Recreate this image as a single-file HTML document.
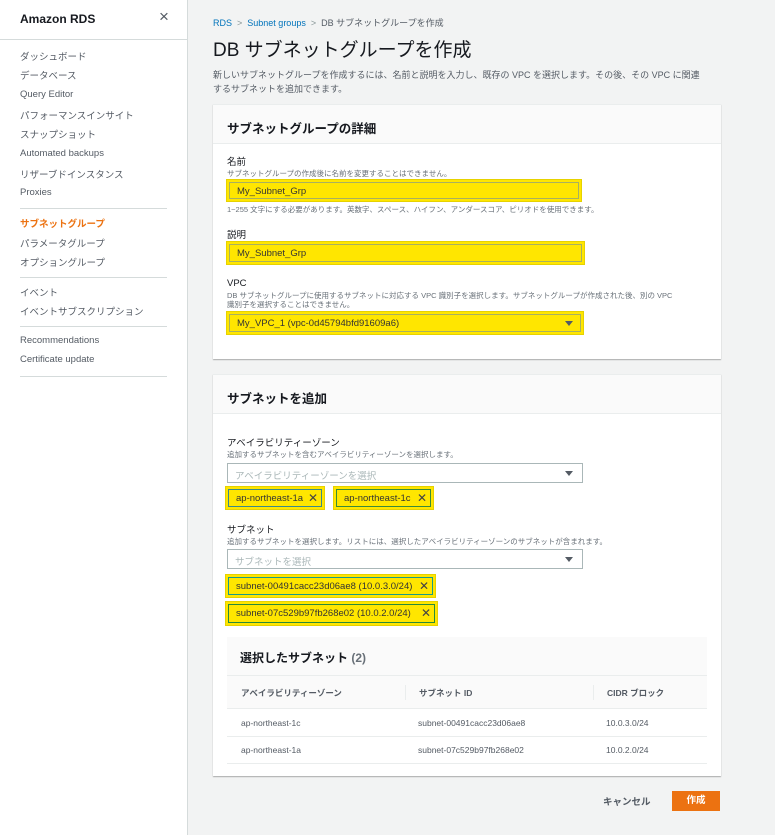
<!DOCTYPE html>
<html><head><meta charset="utf-8"><style>
*{box-sizing:border-box;margin:0;padding:0}
body{width:775px;height:835px;background:#f2f3f3;font-family:"Liberation Sans","Noto Sans CJK JP",sans-serif;position:relative;overflow:hidden;color:#16191f}
.a{position:absolute;white-space:nowrap}
.side{position:absolute;left:0;top:0;width:188px;height:835px;background:#fff;border-right:1px solid #d5dbdb}
.si{position:absolute;left:20px;font-size:9.5px;color:#545b64}
.hr{position:absolute;left:20px;width:147px;border-top:1px solid #d5dbdb}
.panel{position:absolute;left:213px;width:508px;background:#fff;box-shadow:0 1px 1px rgba(0,0,0,.3);border-top:1px solid #eaeded}
.ph{height:39px;background:#fafafa;border-bottom:1px solid #eaeded;font-weight:bold;font-size:12.5px;padding:13px 0 0 14px}
.lbl{font-size:9.5px;color:#16191f}
.desc{font-size:7.5px;color:#687078}
.yel{position:absolute;background:#ffe600;border:1px solid #e6d200}
.inp{position:absolute;border:1px solid #aab7b8;background:#fff;font-size:9.5px;padding:4px 7px;color:#16191f}
.yel .inner{position:absolute;left:2px;top:2px;right:2px;bottom:2px;border:1px solid #a8b060;font-size:9.5px;padding:3px 7px;color:#333}
.tri{position:absolute;right:9px;top:7px;width:0;height:0;border-left:4px solid transparent;border-right:4px solid transparent;border-top:5px solid #545b64}
.x{position:absolute;right:6px;top:1px;font-size:12px;color:#444;font-weight:300}
.th{font-size:8.5px;font-weight:bold;color:#545b64}
.td{font-size:8.5px;color:#545b64}
</style></head><body>
<div class="side">
<div class="a" style="left:20px;top:12px;font-size:12px;font-weight:bold;color:#16191f">Amazon RDS</div>
<div class="a" style="left:159px;top:7px;font-size:17px;color:#545b64">×</div>
<div style="position:absolute;left:0;top:39px;width:187px;border-top:1px solid #d5dbdb"></div>
<div class="si" style="top:49px">ダッシュボード</div>
<div class="si" style="top:68px">データベース</div>
<div class="si" style="top:89px">Query Editor</div>
<div class="si" style="top:108px">パフォーマンスインサイト</div>
<div class="si" style="top:127px">スナップショット</div>
<div class="si" style="top:148px">Automated backups</div>
<div class="si" style="top:167px">リザーブドインスタンス</div>
<div class="si" style="top:187px">Proxies</div>
<div class="hr" style="top:208px"></div>
<div class="si" style="top:216px;color:#ec7211;font-weight:bold">サブネットグループ</div>
<div class="si" style="top:236px">パラメータグループ</div>
<div class="si" style="top:255px">オプショングループ</div>
<div class="hr" style="top:277px"></div>
<div class="si" style="top:285px">イベント</div>
<div class="si" style="top:304px">イベントサブスクリプション</div>
<div class="hr" style="top:326px"></div>
<div class="si" style="top:335px">Recommendations</div>
<div class="si" style="top:354px">Certificate update</div>
<div class="hr" style="top:376px"></div>
</div>

<div class="a" style="left:213px;top:16px;font-size:9px;color:#0073bb">RDS <span style="color:#879596">&nbsp;&gt;&nbsp;</span> Subnet groups <span style="color:#879596">&nbsp;&gt;&nbsp;</span> <span style="color:#545b64">DB サブネットグループを作成</span></div>
<div class="a" style="left:213px;top:35px;font-size:19px;color:#16191f">DB サブネットグループを作成</div>
<div class="a" style="left:213px;top:68px;font-size:9px;color:#545b64;line-height:14px">新しいサブネットグループを作成するには、名前と説明を入力し、既存の VPC を選択します。その後、その VPC に関連<br>するサブネットを追加できます。</div>

<div class="panel" style="top:104px;height:255px">
<div class="ph">サブネットグループの詳細</div>
</div>
<div class="a lbl" style="left:227px;top:154px">名前</div>
<div class="a desc" style="left:227px;top:168px">サブネットグループの作成後に名前を変更することはできません。</div>
<div class="yel" style="left:226px;top:179px;width:356px;height:23px"><div class="inner">My_Subnet_Grp</div></div>
<div class="a desc" style="left:227px;top:204px">1~255 文字にする必要があります。英数字、スペース、ハイフン、アンダースコア、ピリオドを使用できます。</div>
<div class="a lbl" style="left:227px;top:227px">説明</div>
<div class="yel" style="left:226px;top:241px;width:359px;height:24px"><div class="inner">My_Subnet_Grp</div></div>
<div class="a lbl" style="left:227px;top:278px">VPC</div>
<div class="a desc" style="left:227px;top:291px;line-height:9px">DB サブネットグループに使用するサブネットに対応する VPC 識別子を選択します。サブネットグループが作成された後、別の VPC<br>識別子を選択することはできません。</div>
<div class="yel" style="left:226px;top:311px;width:358px;height:24px"><div class="inner">My_VPC_1 (vpc-0d45794bfd91609a6)</div><div class="tri" style="top:9px;right:10px"></div></div>

<div class="panel" style="top:374px;height:402px">
<div class="ph">サブネットを追加</div>
</div>
<div class="a lbl" style="left:227px;top:435px">アベイラビリティーゾーン</div>
<div class="a desc" style="left:227px;top:449px">追加するサブネットを含むアベイラビリティーゾーンを選択します。</div>
<div class="inp" style="left:227px;top:463px;width:356px;height:20px;color:#aab7b8">アベイラビリティーゾーンを選択<div class="tri"></div></div>
<div class="yel" style="left:225px;top:486px;width:100px;height:24px"><div class="inner" style="border-color:#3a8a8a">ap-northeast-1a</div><div class="x" style="top:4px">✕</div></div>
<div class="yel" style="left:333px;top:486px;width:101px;height:24px"><div class="inner" style="border-color:#3a8a3a">ap-northeast-1c</div><div class="x" style="top:4px">✕</div></div>
<div class="a lbl" style="left:227px;top:522px">サブネット</div>
<div class="a desc" style="left:227px;top:536px">追加するサブネットを選択します。リストには、選択したアベイラビリティーゾーンのサブネットが含まれます。</div>
<div class="inp" style="left:227px;top:549px;width:356px;height:20px;color:#aab7b8">サブネットを選択<div class="tri"></div></div>
<div class="yel" style="left:225px;top:574px;width:211px;height:24px"><div class="inner" style="border-color:#1a9a8a">subnet-00491cacc23d06ae8 (10.0.3.0/24)</div><div class="x" style="top:4px">✕</div></div>
<div class="yel" style="left:225px;top:601px;width:213px;height:25px"><div class="inner" style="border-color:#2a8a3a">subnet-07c529b97fb268e02 (10.0.2.0/24)</div><div class="x" style="top:4px">✕</div></div>

<div style="position:absolute;left:227px;top:637px;width:480px;height:39px;background:#fafafa;border-bottom:1px solid #eaeded"></div>
<div class="a" style="left:240px;top:649px;font-size:12px;font-weight:bold">選択したサブネット <span style="color:#687078">(2)</span></div>
<div style="position:absolute;left:227px;top:676px;width:480px;height:33px;background:#fafafa;border-bottom:1px solid #eaeded"></div>
<div class="a th" style="left:241px;top:687px">アベイラビリティーゾーン</div>
<div style="position:absolute;left:405px;top:685px;height:15px;border-left:1px solid #eaeded"></div>
<div class="a th" style="left:419px;top:687px">サブネット ID</div>
<div style="position:absolute;left:593px;top:685px;height:15px;border-left:1px solid #eaeded"></div>
<div class="a th" style="left:607px;top:687px">CIDR ブロック</div>
<div class="a td" style="left:241px;top:718px">ap-northeast-1c</div>
<div class="a td" style="left:418px;top:718px">subnet-00491cacc23d06ae8</div>
<div class="a td" style="left:606px;top:718px">10.0.3.0/24</div>
<div style="position:absolute;left:227px;top:736px;width:480px;border-top:1px solid #eaeded"></div>
<div class="a td" style="left:241px;top:745px">ap-northeast-1a</div>
<div class="a td" style="left:418px;top:745px">subnet-07c529b97fb268e02</div>
<div class="a td" style="left:606px;top:745px">10.0.2.0/24</div>
<div style="position:absolute;left:227px;top:763px;width:480px;border-top:1px solid #eaeded"></div>

<div class="a" style="left:603px;top:794px;font-size:9.5px;font-weight:bold;color:#545b64">キャンセル</div>
<div class="a" style="left:672px;top:791px;width:48px;height:20px;background:#ec7211;color:#fff;font-size:9.5px;font-weight:bold;text-align:center;line-height:20px">作成</div>
</body></html>
